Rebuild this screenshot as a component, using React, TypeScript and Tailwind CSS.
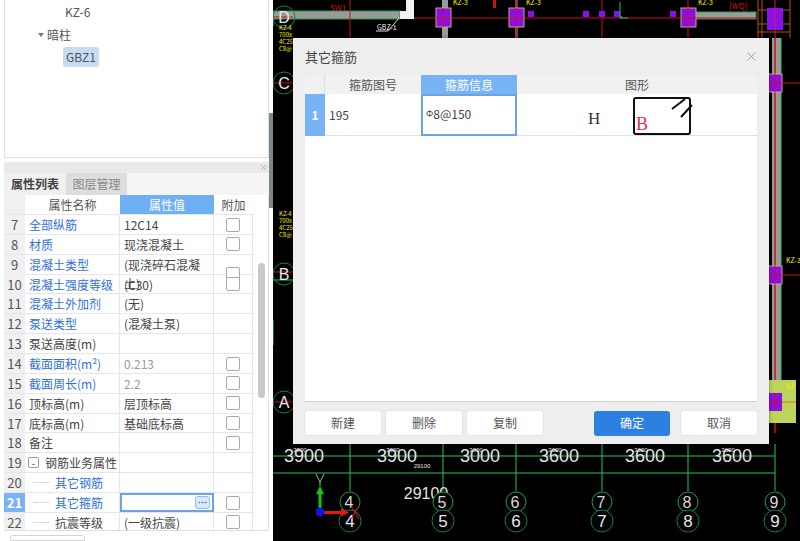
import { Ellipsis, X } from "lucide-react";

const font = { fontFamily: '"Noto Sans CJK SC", "Noto Sans", sans-serif' };

type Row = {
  no: number;
  name: string;
  value?: string;
  link?: boolean;
  muted?: boolean;
  check?: boolean;
  level?: number;
  active?: boolean;
};

const rows: Row[] = [
  { no: 7, name: "全部纵筋", value: "12C14", link: true, check: true },
  { no: 8, name: "材质", value: "现浇混凝土", link: true, check: true },
  { no: 9, name: "混凝土类型", value: "(现浇碎石混凝土)", link: true, check: true },
  { no: 10, name: "混凝土强度等级", value: "(C30)", link: true, check: true },
  { no: 11, name: "混凝土外加剂", value: "(无)", link: true },
  { no: 12, name: "泵送类型", value: "(混凝土泵)", link: true },
  { no: 13, name: "泵送高度(m)" },
  { no: 14, name: "截面面积(m²)", value: "0.213", link: true, muted: true, check: true },
  { no: 15, name: "截面周长(m)", value: "2.2", link: true, muted: true, check: true },
  { no: 16, name: "顶标高(m)", value: "层顶标高", check: true },
  { no: 17, name: "底标高(m)", value: "基础底标高", check: true },
  { no: 18, name: "备注", check: true },
  { no: 19, name: "钢筋业务属性", level: 1 },
  { no: 20, name: "其它钢筋", link: true, level: 2 },
  { no: 21, name: "其它箍筋", link: true, level: 2, check: true, active: true },
  { no: 22, name: "抗震等级", value: "(一级抗震)", level: 2, check: true },
];

const axisX = [350, 443, 516, 602, 688, 775];
const axisLabels = ["4", "5", "6", "7", "8", "9"];
const spans = [
  { x: 304, t: "3900" },
  { x: 397, t: "3900" },
  { x: 480, t: "3000" },
  { x: 559, t: "3600" },
  { x: 645, t: "3600" },
  { x: 732, t: "3600" },
];
const sideAxes = [
  { y: 17, t: "D" },
  { y: 83, t: "C" },
  { y: 274, t: "B" },
  { y: 402, t: "A" },
];
const columns = [
  [443, 17],
  [516, 17],
  [688, 17],
];
const dots = [531, 586, 602, 617, 673];

function CadCanvas() {
  return (
    <svg viewBox="273 0 527 541" className="absolute inset-0 h-full w-full">
      <rect x="273" y="11" width="127" height="8" fill="#9a9a9a" stroke="#16a34a" />
      <path d="M400 11h6V0h8v19h-14z" fill="#f2f2f2" />
      <rect x="696" y="12" width="60" height="7" fill="#9a9a9a" stroke="#16a34a" />
      <path d="M414 18H757" stroke="#c8101a" />
      <path d="M350 0V38M602 0V38M688 0V38" stroke="#c8101a" />
      <rect x="442" y="0" width="6" height="38" fill="#9a9a9a" />
      <rect x="515" y="0" width="3" height="38" fill="#8a3a3a" />
      <rect x="493" y="0" width="3" height="8" fill="#c8101a" />
      {columns.map(([x, y]) => (
        <g key={x}>
          <rect x={x - 7} y={y - 9} width="15" height="19" fill="#8a10e8" stroke="#d8a080" />
          <path d={`M${x} ${y - 9}v19M${x - 7} ${y + 1}h15`} stroke="#c8101a" />
          <text x={x + 10} y="5" fontSize="7" fill="#f5f000" style={font}>KZ-3</text>
        </g>
      ))}
      {dots.map((x) => (
        <rect key={x} x={x - 3} y="11" width="6" height="6" fill="#8a10e8" />
      ))}
      <path d="M620 18l2-2M620 18h8M620 18V2" stroke="#22c55e" />
      <text x="330" y="11" fontSize="8" fill="#c8101a" style={font}>SW1</text>
      <text x="729" y="9" fontSize="8" fill="#c8101a" style={font}>[WQ]</text>
      <text x="377" y="30" fontSize="7" fill="#f0f0f0" style={font}>GBZ-1</text>
      <path d="M376 31h12l11-13" stroke="#ddd" fill="none" />

      <g stroke="#b45309" fill="none">
        <path d="M758 0V38M762 0V38M790 0V38M758 10H790M758 24H790M758 32H790" />
      </g>
      <rect x="767" y="8" width="16" height="22" fill="#8a10e8" />
      <path d="M775 0V38" stroke="#e0106a" />

      <rect x="772" y="38" width="9" height="400" fill="#9a9a9a" />
      <path d="M781 38V380" stroke="#22c55e" />
      <path d="M775 38V433" stroke="#c8101a" strokeWidth="1.5" />
      <path d="M782 83H800M782 275H800" stroke="#c8101a" />
      <rect x="768" y="380" width="28" height="43" fill="#bcd45c" />
      <rect x="781" y="423" width="19" height="20" fill="#000" />
      <rect x="772" y="423" width="9" height="20" fill="#000" />
      <path d="M775 423V433" stroke="#c8101a" strokeWidth="1.5" />
      <path d="M782 402H796" stroke="#d97706" />
      {[83, 275, 402].map((y) => (
        <g key={y}>
          <rect x="768" y={y - 9} width="14" height="18" fill="#8a10e8" stroke={y === 402 ? "none" : "#d8a080"} />
          <path d={`M775 ${y - 9}v18M768 ${y}h14`} stroke="#c8101a" />
        </g>
      ))}
      <text x="786" y="263" fontSize="7" fill="#f5f000" style={font}>KZ-3</text>
      <text x="786" y="389" fontSize="7" fill="#f5f000" style={font}>KZ</text>

      {sideAxes.map(({ y, t }) => (
        <g key={t}>
          <path d={`M273 ${y === 274 ? 272 : y}h20`} stroke="#c8101a" />
          {t === "B" && <path d="M273 280h20" stroke="#22c55e" />}
          <circle cx="284" cy={y} r="11" fill="none" stroke="#15803d" />
          <text x="284" y={y + 6} fontSize="16" fill="#e8e8e8" textAnchor="middle" style={{ fontFamily: '"Liberation Sans", sans-serif' }}>{t}</text>
        </g>
      ))}
      <path d="M273 18V26M273 320V345" stroke="#22c55e" />
      {[30, 216].map((y) => (
        <g key={y} fill="#f5f000" fontSize="6" style={font}>
          <text x="279" y={y}>KZ-4</text>
          <text x="279" y={y + 7}>700x</text>
          <text x="279" y={y + 14}>4C25</text>
          <text x="279" y={y + 21}>C8@</text>
        </g>
      ))}

      <path d="M273 456H775M273 473H775" stroke="#22c55e" />
      {axisX.map((x) => (
        <path key={x} d={`M${x} 444V491`} stroke="#22c55e" />
      ))}
      {spans.map(({ x, t }) => (
        <g key={x} style={{ fontFamily: '"Liberation Sans", sans-serif' }} textAnchor="middle">
          <text x={x} y="462" fontSize="18" fill="#e4e4e4">{t}</text>
          <text x={x - 4} y="452" fontSize="6" fill="#e4e4e4">{t}</text>
        </g>
      ))}
      <text x="422" y="468" fontSize="6" fill="#e4e4e4" textAnchor="middle" style={{ fontFamily: '"Liberation Sans", sans-serif' }}>29100</text>
      <text x="426" y="499" fontSize="16" fill="#e4e4e4" textAnchor="middle" style={{ fontFamily: '"Liberation Sans", sans-serif' }}>29100</text>
      {axisX.map((x, i) => (
        <g key={x} textAnchor="middle" style={{ fontFamily: '"Liberation Sans", sans-serif' }}>
          <circle cx={x} cy="502" r="10" fill="#000" stroke="#16a34a" />
          <text x={x - 1} y="508" fontSize="16" fill="#d8d8d8">{axisLabels[i]}</text>
          <circle cx={x} cy="521" r="11" fill="#000" stroke="#15803d" />
          <text x={x} y="527" fontSize="17" fill="#e8e8e8">{axisLabels[i]}</text>
        </g>
      ))}

      <path d="M320 512V492" stroke="#16c60c" strokeWidth="3" />
      <path d="M320 486l-4 8h8z" fill="#16c60c" />
      <path d="M316 474l4 8 4-8M320 482v4" stroke="#7fd67f" fill="none" />
      <path d="M320 512.5H344" stroke="#ee1111" strokeWidth="3" />
      <path d="M349 512.5l-8-4v8z" fill="#ee1111" />
      <path d="M351 506l8 13M359 506l-8 13" stroke="#ee1111" />
      <circle cx="320" cy="512" r="4.5" fill="#1414d8" />
    </svg>
  );
}

function RebarDialog() {
  const btn = "flex h-[24px] w-[76px] items-center justify-center rounded-[3px] bg-white text-[12px] text-[#555] shadow-[0_0_2px_#d0d0d0]";
  return (
    <div className="absolute left-[20px] top-[38px] flex h-[406px] w-[476px] flex-col bg-[#eeeeee] px-3 shadow-[0_0_4px_rgba(0,0,0,0.4)]">
      <div className="flex h-[37px] items-center justify-between">
        <span className="text-[13px] text-[#444]">其它箍筋</span>
        <X size={15} strokeWidth={1.2} className="mr-[-2px] text-[#888]" />
      </div>
      <div className="flex flex-1 flex-col border-b border-[#d0d0d0] bg-white">
        <div className="grid h-[19px] grid-cols-[20px_96px_96px_1fr] bg-[#f1f1f1] text-center text-[12px] leading-[19px] text-[#555]">
          <div className="border-r border-[#dcdcdc]" />
          <div>箍筋图号</div>
          <div className="bg-[#78b4f5] text-white">箍筋信息</div>
          <div>图形</div>
        </div>
        <div className="grid h-[42px] grid-cols-[20px_96px_96px_1fr] border-b border-[#e0e0e0] text-[12px] text-[#444]">
          <div className="flex items-center justify-center bg-[#78b4f5] font-bold text-white">1</div>
          <div className="flex items-center pl-[4px]">195</div>
          <div className="flex items-center border-2 border-[#6ba5e0] pb-[3px] pl-[3px]">
            <span className="text-[9px]">Φ</span>8@150
          </div>
          <svg viewBox="0 0 240 42" className="h-[42px] w-[240px]">
            <text x="71" y="30" fontSize="17" fill="#333" style={{ fontFamily: '"Liberation Serif", serif' }}>H</text>
            <rect x="117" y="4" width="56" height="36" rx="2" fill="none" stroke="#111" strokeWidth="2" />
            <text x="119" y="36" fontSize="18" fill="#e8304a" style={{ fontFamily: '"Liberation Serif", serif' }}>B</text>
            <path d="M155 15l13-10M164 23l11-12" stroke="#111" strokeWidth="2" />
          </svg>
        </div>
      </div>
      <div className="flex h-[42px] items-center gap-[5px]">
        <button className={btn}>新建</button>
        <button className={btn}>删除</button>
        <button className={btn}>复制</button>
        <button className="ml-auto flex h-[25px] w-[76px] items-center justify-center rounded-[3px] bg-[#2b80e0] text-[12px] text-white">确定</button>
        <button className={`${btn} ml-[6px]`}>取消</button>
      </div>
    </div>
  );
}

function PropertyRow({ row }: { row: Row }) {
  const pad = row.level === 2 ? "pl-[30px]" : row.level === 1 ? "pl-[20px]" : "pl-[4px]";
  return (
    <div className="grid h-[19.87px] shrink-0 grid-cols-[21px_95px_94px_39px] border-b border-[#e6e6e6] text-[12px] leading-[19px]">
      <div className={`text-center text-[13px] ${row.active ? "bg-[#78b4f5] font-bold text-white" : "bg-[#f0f0f0] text-[#555]"}`}>
        {row.no}
      </div>
      <div className={`relative border-r border-[#e6e6e6] ${pad} ${row.link ? "text-[#2f6fdc]" : "text-[#444]"}`}>
        {row.level === 1 && (
          <span className="absolute left-[3px] top-[4px] flex h-[11px] w-[11px] items-center justify-center rounded-[2px] border border-[#999] text-[10px] leading-none text-[#555]">
            -
          </span>
        )}
        {row.level === 2 && <span className="absolute left-[8px] top-[9px] h-px w-[17px] bg-[#ddd]" />}
        {row.name}
      </div>
      {row.active ? (
        <div className="flex items-center justify-end border-2 border-[#6ba5e0] pr-[2px]">
          <span className="flex h-[13px] w-[15px] items-center justify-center rounded-[3px] border border-[#8fbbe8] bg-[#dbe9f8] text-[#3d7cc9]">
            <Ellipsis size={11} />
          </span>
        </div>
      ) : (
        <div className={`border-r border-[#e6e6e6] pl-[4px] ${row.muted ? "text-[#999]" : "text-[#444]"}`}>
          {row.value}
        </div>
      )}
      <div className="flex items-center justify-center border-r border-[#e6e6e6]">
        {row.check && <span className="h-[14px] w-[14px] rounded-[2px] border border-[#aaa] bg-white" />}
      </div>
    </div>
  );
}

function LeftPanel() {
  return (
    <aside className="flex w-[269px] flex-col bg-white pl-[4px]">
      <div className="h-[158px] shrink-0 border-x border-b border-[#dedede] pl-[33px] text-[12px] text-[#555]">
        <div className="h-[23px] pl-[27px] pt-[3px]">KZ-6</div>
        <div className="flex h-[23px] items-center gap-[3px] pt-[1px]">
          <span className="h-0 w-0 border-x-[3px] border-t-[4px] border-x-transparent border-t-[#777]" />
          <span>暗柱</span>
        </div>
        <div className="ml-[25px] mt-[1px] w-fit rounded-[3px] bg-[#c6dcf4] px-[3px] py-[1px]">GBZ1</div>
      </div>
      <div className="mt-[4px] flex h-[11px] shrink-0 items-center justify-end bg-[#e9e9e9] pr-[1px]">
        <X size={9} className="text-[#aaa]" />
      </div>
      <div className="flex h-[22px] shrink-0 bg-[#f5f5f5] text-[12px]">
        <div className="flex w-[62px] items-center justify-center bg-[#f0f0f0] font-bold text-[#444]">属性列表</div>
        <div className="flex w-[61px] items-center justify-center bg-[#dddddd] text-[#888]">图层管理</div>
      </div>
      <div className="flex h-[336px] shrink-0 overflow-hidden border-b border-[#dedede]">
        <div className="flex w-[250px] shrink-0 flex-col overflow-hidden">
          <div className="grid h-[20px] shrink-0 grid-cols-[21px_95px_94px_39px] border-b border-[#e6e6e6] text-center text-[12px] leading-[19px] text-[#555]">
            <div className="bg-[#f0f0f0]" />
            <div>属性名称</div>
            <div className="bg-[#6fb0f5] text-white">属性值</div>
            <div>附加</div>
          </div>
          {rows.map((row) => (
            <PropertyRow key={row.no} row={row} />
          ))}
        </div>
        <div className="flex-1 border-r border-[#dedede] pl-[4px] pt-[68px]">
          <div className="h-[135px] w-[7px] rounded-full bg-[#c9c9c9]" />
        </div>
      </div>
      <div className="ml-[6px] mt-[4px] h-[10px] w-[75px] rounded-t-[3px] border border-[#d5d5d5]" />
    </aside>
  );
}

export default function App() {
  return (
    <div className="flex h-[541px] w-[800px] overflow-hidden bg-white" style={font}>
      <LeftPanel />
      <div className="w-[4px] shrink-0 pt-[113px]">
        <div className="h-[95px] bg-[#7d858e]" />
      </div>
      <main className="relative flex-1 overflow-hidden bg-black">
        <CadCanvas />
        <RebarDialog />
      </main>
    </div>
  );
}
